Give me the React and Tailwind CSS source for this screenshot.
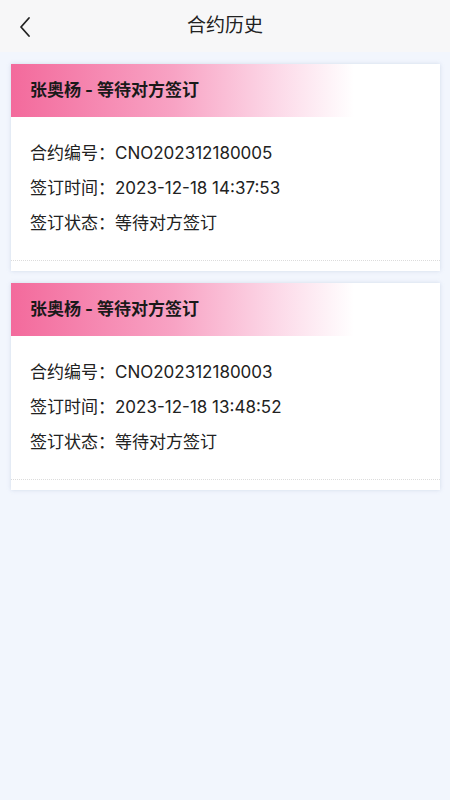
import React from 'react';

const contracts = [
  { id: 'CNO202312180005', time: '2023-12-18 14:37:53', status: '等待对方签订', name: '张奥杨' },
  { id: 'CNO202312180003', time: '2023-12-18 13:48:52', status: '等待对方签订', name: '张奥杨' },
];

function ContractCard({ c }) {
  return (
    <div className="bg-white shadow-[0_0_4px_rgba(150,170,200,0.35)]">
      <div className="h-[53px] flex items-center pl-[19px] bg-[linear-gradient(90deg,#f36a9c_0%,#f8a3c4_38%,#fcd9e8_62%,#ffffff_80%)]">
        <span className="text-[17px] font-bold text-[#1a1a1a]">{c.name} - {c.status}</span>
      </div>
      <div className="pt-[19px] pb-[19px] pl-[19px] text-[17px] text-[#222]">
        <div className="leading-[35px]">合约编号：{c.id}</div>
        <div className="leading-[35px]">签订时间：{c.time}</div>
        <div className="leading-[35px]">签订状态：{c.status}</div>
      </div>
      <div className="border-t border-dotted border-[#dcdcdc] h-[11px]" />
    </div>
  );
}

export default function App() {
  return (
    <div className="w-[450px] h-[800px] bg-[#f2f6fd] font-['Inter','Noto_Sans_CJK_SC',sans-serif]">
      <div className="relative h-[52px] bg-[#f7f7f8] flex items-center justify-center">
        <button className="absolute left-[16px] top-[15px] text-[#222]">
          <svg width="16" height="24" viewBox="0 0 16 24" fill="none" stroke="currentColor" strokeWidth="1.8" strokeLinecap="round" strokeLinejoin="round">
            <path d="M13 3 L5 12 L13 21" />
          </svg>
        </button>
        <h1 className="text-[19px] text-[#222]">合约历史</h1>
      </div>
      <div className="pl-[11px] pr-[10px] pt-[12px] flex flex-col gap-[12px]">
        {contracts.map(c => <ContractCard key={c.id} c={c} />)}
      </div>
    </div>
  );
}
